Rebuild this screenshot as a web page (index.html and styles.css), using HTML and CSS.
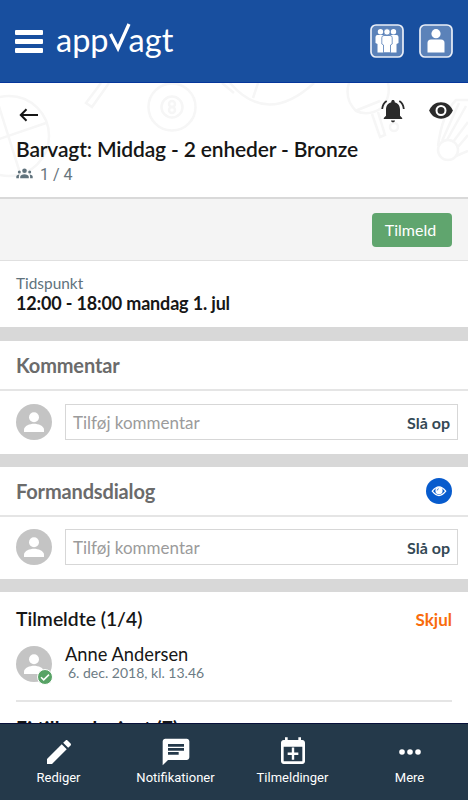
FILE: index.html
```
<!DOCTYPE html>
<html lang="da">
<head>
    <meta charset="utf-8" />
    <meta name="viewport" content="width=device-width, initial-scale=1" />
    <title>appVagt</title>
    <link rel="stylesheet" href="styles.css">
</head>
<body>
    <svg width="0" height="0" class="defs">
        <symbol id="person" viewBox="0 0 36 36">
            <circle cx="18" cy="18" r="18" fill="#c4c4c4"/>
            <circle cx="18" cy="13.2" r="5" fill="#fff"/>
            <path d="M8 28v-2.2c0-4 6-6 10-6s10 2 10 6V28z" fill="#fff"/>
        </symbol>
    </svg>
    <div class="app">
        <header class="topbar">
            <div class="menu"><span></span><span></span><span></span></div>
            <div class="logo">app<svg class="logo-v" viewBox="0 0 22 32" aria-label="V"><path d="M1.500 11L9 25.500L20 1" fill="none" stroke="#fff" stroke-width="3.300"/></svg>agt</div>
            <div class="top-buttons">
                <svg width="34" height="34" viewBox="0 0 34 34">
                    <rect x="1" y="1" width="32" height="32" rx="5" fill="#5b82b9" stroke="#e9eef7" stroke-width="1.7"/>
                    <g fill="#fff">
                        <circle cx="10.500" cy="7.800" r="2.700"/>
                        <circle cx="23.500" cy="7.800" r="2.700"/>
                        <path d="M7.500 11h6v17.500h-6V20l-2-1v-6q0-2 2-2zM20.500 11h6q2 0 2 2v6l-2 1v8.500h-6z"/>
                    </g>
                    <g fill="#fff" stroke="#5b82b9" stroke-width=".8">
                        <path d="M14 11.500h6q2.200 0 2.200 2.200V20l-1.700 1v7.700h-7V21l-1.700-1v-6.300q0-2.200 2.200-2.200z"/>
                        <circle cx="17" cy="7.900" r="3.200"/>
                    </g>
                </svg>
                <svg width="34" height="34" viewBox="0 0 34 34">
                    <rect x="1" y="1" width="32" height="32" rx="5" fill="#5b82b9" stroke="#e9eef7" stroke-width="1.7"/>
                    <circle cx="17" cy="9.700" r="4.600" fill="#fff"/>
                    <path d="M8.500 28.500V19q0-3.600 3.500-3.600h10q3.500 0 3.500 3.600v9.500z" fill="#fff"/>
                </svg>
            </div>
        </header>

        <section class="title-block">
            <svg class="pattern" viewBox="0 0 468 114" fill="none" stroke="#f6f6f6" stroke-width="2.500">
                <circle cx="9" cy="53" r="40"/>
                <path d="M-4 14L20 90M-30 66L46 40"/>
                <path d="M101 0L86 20l6 4L109 0"/>
                <circle cx="172" cy="24" r="23.500"/>
                <circle cx="172" cy="24" r="10.500"/>
                <circle cx="172" cy="21" r="3"/>
                <circle cx="172" cy="27" r="3"/>
                <path d="M222 0l12 10M230 0q37 43 84 0M258 0l-5 15"/>
                <path d="M388 0q3 12-5 24q-14 10-27 4q-12-12-7-28M355 28l25-10M372 31l8 23l5-2l-7-23"/>
                <circle cx="394" cy="44" r="4"/>
                <circle cx="448" cy="67" r="10"/>
                <path d="M438 63q4-32 18-46h12M442 58l17-38M447 57l19-34M453 59l15-20M457 65l11-13M456 73l12-5"/>
            </svg>
            <div class="actions">
                <svg class="back" width="20" height="14" viewBox="0 0 20 14" fill="none" stroke="#161616" stroke-width="2"><path d="M19 7H2M7.500 1.300L1.800 7l5.700 5.700"/></svg>
                <svg class="bell" width="24" height="24" viewBox="0 0 24 24" fill="#2b2b2b">
                    <path d="M10 21.500c0 1 .9 1.800 2 1.800s2-.8 2-1.800z"/>
                    <path d="M19 16.800V10.500c0-3.600-2-6.400-5.300-7.200V2.500C13.700 1.500 13 .9 12 .9s-1.700.6-1.700 1.600v.8C7 4.100 5 6.900 5 10.500v6.300l-2.200 2.200v.9h18.400V19z"/>
                    <path d="M5.700 2C3 3.700 1.500 6.400 1.200 10M18.300 2c2.700 1.700 4.200 4.400 4.500 8" fill="none" stroke="#2b2b2b" stroke-width="1.800"/>
                </svg>
                <svg class="eye" width="24" height="17" viewBox="0 0 24 17">
                    <path d="M12 .3C6.500.3 2 3.700.2 8.500 2 13.300 6.500 16.700 12 16.700s10-3.400 11.800-8.200C22 3.700 17.500.3 12 .3z" fill="#2b2b2b"/>
                    <circle cx="12" cy="8.500" r="4.500" fill="#2b2b2b" stroke="#fff" stroke-width="2"/>
                </svg>
            </div>
            <h1>Barvagt: Middag - 2 enheder - Bronze</h1>
            <div class="count">
                <svg width="17" height="11" viewBox="0 0 17 11" fill="#60727c">
                    <circle cx="8.500" cy="2.800" r="2.300"/>
                    <circle cx="3.300" cy="3.900" r="1.500"/>
                    <circle cx="13.700" cy="3.900" r="1.500"/>
                    <path d="M4.200 10.200V8.700c0-1.600 2.300-2.500 4.300-2.500s4.300.9 4.300 2.500v1.500zM.3 10.200V8.600c0-1.100 1.400-2 3.200-2.100-.4.600-.6 1.300-.6 2v1.700zM16.700 10.200V8.600c0-1.100-1.400-2-3.200-2.100.4.600.6 1.300.6 2v1.700z"/>
                </svg>
                <span>1 / 4</span>
            </div>
        </section>

        <section class="signup"><button class="btn">Tilmeld</button></section>

        <section class="time">
            <div class="label">Tidspunkt</div>
            <div class="value">12:00 - 18:00 mandag 1. jul</div>
        </section>

        <section class="dialog">
            <div class="dialog-head"><h2>Kommentar</h2></div>
            <div class="write">
                <svg class="avatar"><use href="#person"/></svg>
                <div class="field"><span class="placeholder">Tilføj kommentar</span><span class="post">Slå op</span></div>
            </div>
        </section>

        <section class="dialog second">
            <div class="dialog-head">
                <h2>Formandsdialog</h2>
                <svg width="26" height="26" viewBox="0 0 26 26">
                    <circle cx="13" cy="13" r="13" fill="#075bcd"/>
                    <path d="M6.300 13.200q6.700-8.600 13.400 0q-6.700 8.600-13.400 0z" fill="none" stroke="#fff" stroke-width="1.300"/>
                    <circle cx="13" cy="12.700" r="3.600" fill="#fff"/>
                    <path d="M11.200 12.500q0-1.600 1.600-1.800" fill="none" stroke="#075bcd" stroke-width=".7"/>
                </svg>
            </div>
            <div class="write">
                <svg class="avatar"><use href="#person"/></svg>
                <div class="field"><span class="placeholder">Tilføj kommentar</span><span class="post">Slå op</span></div>
            </div>
        </section>

        <section class="people">
            <div class="people-head"><h3>Tilmeldte (1/4)</h3><span class="hide">Skjul</span></div>
            <div class="member">
                <div class="picture">
                    <svg class="avatar"><use href="#person"/></svg>
                    <svg class="check" width="16" height="16" viewBox="0 0 16 16"><circle cx="8" cy="8" r="7.500" fill="#58a366" stroke="#fff"/><path d="M4 8.300l2.700 2.600 5.300-5.300" fill="none" stroke="#fff" stroke-width="1.500"/></svg>
                </div>
                <div>
                    <div class="name">Anne Andersen</div>
                    <div class="date">6. dec. 2018, kl. 13.46</div>
                </div>
            </div>
            <h3 class="next">Ej tilkendegivet (7)</h3>
        </section>

        <nav class="tabs">
            <a class="tab">
                <svg width="32" height="32" viewBox="0 0 24 24" fill="#fff"><path d="M3 17.250V21h3.750L17.810 9.940l-3.750-3.750L3 17.250zM20.710 7.040c.39-.39.39-1.020 0-1.410l-2.340-2.340c-.39-.39-1.020-.39-1.410 0l-1.830 1.830 3.750 3.750 1.830-1.830z"/></svg>
                Rediger
            </a>
            <a class="tab">
                <svg width="32" height="32" viewBox="0 0 24 24" fill="#fff"><path d="M20 2H4c-1.100 0-1.990.9-1.990 2L2 22l4-4h14c1.100 0 2-.9 2-2V4c0-1.100-.9-2-2-2zM6 9h12v2H6V9zm8 5H6v-2h8v2zm4-6H6V6h12v2z"/></svg>
                Notifikationer
            </a>
            <a class="tab">
                <svg width="32" height="32" viewBox="0 0 24 24" fill="#fff"><path d="M19 3h-1V1h-2v2H8V1H6v2H5c-1.100 0-2 .9-2 2v14c0 1.100.9 2 2 2h14c1.100 0 2-.9 2-2V5c0-1.100-.9-2-2-2zm0 16H5V8h14v11z"/><path d="M11.100 8.700h1.800v3.700H16v1.800h-3.100v3.700h-1.800v-3.700H8v-1.800h3.100z"/></svg>
                Tilmeldinger
            </a>
            <a class="tab">
                <svg width="32" height="32" viewBox="0 0 24 24" fill="#fff"><circle cx="6" cy="12" r="2.100"/><circle cx="12" cy="12" r="2.100"/><circle cx="18" cy="12" r="2.100"/></svg>
                Mere
            </a>
        </nav>
    </div>
</body>
</html>
```

FILE: styles.css
```
*{
    box-sizing:border-box;
    margin:0;
    padding:0;
}
body{
    background:#fff;
    font-family:Lato, "Liberation Sans", sans-serif;
    color:#161616;
}
svg{
    display:block;
    flex:none;
}
.defs{
    position:absolute;
}
.app{
    height:800px;
    display:flex;
    flex-direction:column;
    overflow:hidden;
}
.app > *{
    flex:none;
}
.topbar{
    height:83px;
    padding:0 15px;
    display:flex;
    align-items:center;
    background:#184f9f;
    border-bottom:1px solid #06369b;
}
.menu{
    width:28px;
    display:flex;
    flex-direction:column;
    gap:4px;
}
.menu span{
    height:5px;
    border-radius:1px;
    background:#fff;
}
.logo{
    display:flex;
    align-items:center;
    margin:-2px 0 0 13px;
    color:#fff;
    font-size:32.5px;
    line-height:40px;
}
.logo-v{
    width:22px;
    height:32px;
    margin:-2px -2px 0 0;
}
.top-buttons{
    margin-left:auto;
    display:flex;
    gap:15px;
}
/* title */
.title-block{
    position:relative;
    height:116px;
    padding:17px 15px 0 16px;
    border-bottom:2px solid #d9d9d9;
}
.pattern{
    position:absolute;
    left:0;
    top:0;
    width:468px;
    height:114px;
    z-index:-1;
}
.actions{
    display:flex;
    height:36px;
}
.back{
    margin:8px auto 0 3px;
}
.bell{
    margin-right:24px;
    margin-top:-1px;
}
.eye{
    margin-top:2px;
}
h1{
    font-size:21px;
    line-height:26px;
    font-weight:600;
    letter-spacing:-.16px;
}
.count{
    display:flex;
    align-items:center;
    gap:7px;
    height:26px;
    font:16px/26px Roboto, sans-serif;
    color:#68757c;
}
.count svg{
    margin-top:-4px;
}
/* sign up */
.signup{
    height:62px;
    padding:14px 16px 0;
    background:#f4f4f4;
    border-bottom:1px solid #e0e0e0;
}
.btn{
    display:block;
    margin-left:auto;
    width:80px;
    height:34px;
    padding:0 3px 1px 0;
    border:0;
    border-radius:4px;
    background:#60a56e;
    color:#fff;
    font:16px Lato, sans-serif;
}
.time{
    height:80px;
    padding:13px 16px 0;
    border-bottom:14px solid #d8d8d8;
}
.label{
    font-size:15.4px;
    line-height:19px;
    color:#60727c;
}
.value{
    font-size:18px;
    line-height:20px;
    font-weight:700;
    letter-spacing:-.17px;
}
/* comment boxes */
.dialog{
    height:126px;
    border-bottom:13px solid #d8d8d8;
}
.dialog-head{
    display:flex;
    align-items:center;
    justify-content:space-between;
    height:50px;
    padding:0 16px;
    border-bottom:2px solid #e5e5e5;
}
h2{
    font-size:20px;
    line-height:24px;
    letter-spacing:-.15px;
    color:#6b6b6b;
}
.write{
    display:flex;
    align-items:center;
    gap:13px;
    padding:13px 10px 0 16px;
}
.second{
    height:125px;
}
.second .write{
    padding-top:12px;
}
.avatar{
    width:36px;
    height:36px;
}
.field{
    flex:1;
    height:36px;
    padding:0 7px;
    border:1px solid #d7d7d7;
    display:flex;
    align-items:center;
    justify-content:space-between;
}
.placeholder{
    font-size:17px;
    color:#9b9b9b;
}
.post{
    font-size:16px;
    font-weight:700;
    color:#344955;
}
/* members */
.people{
    height:131px;
    padding:0 16px;
    overflow:hidden;
}
.people-head{
    display:flex;
    align-items:center;
    justify-content:space-between;
    height:54px;
}
h3{
    font-size:19.3px;
    line-height:24px;
    font-weight:600;
}
.hide{
    font-size:17px;
    font-weight:700;
    color:#f96b0c;
}
.member{
    display:flex;
    gap:13px;
    height:56px;
    border-bottom:2px solid #e5e5e5;
}
.picture{
    position:relative;
}
.check{
    position:absolute;
    right:-1px;
    top:23px;
}
.name{
    margin-top:-3px;
    font-size:18.3px;
    line-height:22px;
}
.date{
    padding-left:3px;
    font-size:14px;
    line-height:16px;
    color:#6c7b84;
}
.next{
    padding-top:14px;
    font-weight:700;
    letter-spacing:.2px;
}
.tabs{
    display:grid;
    grid-template-columns:repeat(4, 1fr);
    height:77px;
    background:#24394a;
    border-top:1px solid #07103a;
}
.tab{
    display:flex;
    flex-direction:column;
    align-items:center;
    padding-top:12px;
    color:#fff;
    font:13px/20px Roboto, sans-serif;
}
```
